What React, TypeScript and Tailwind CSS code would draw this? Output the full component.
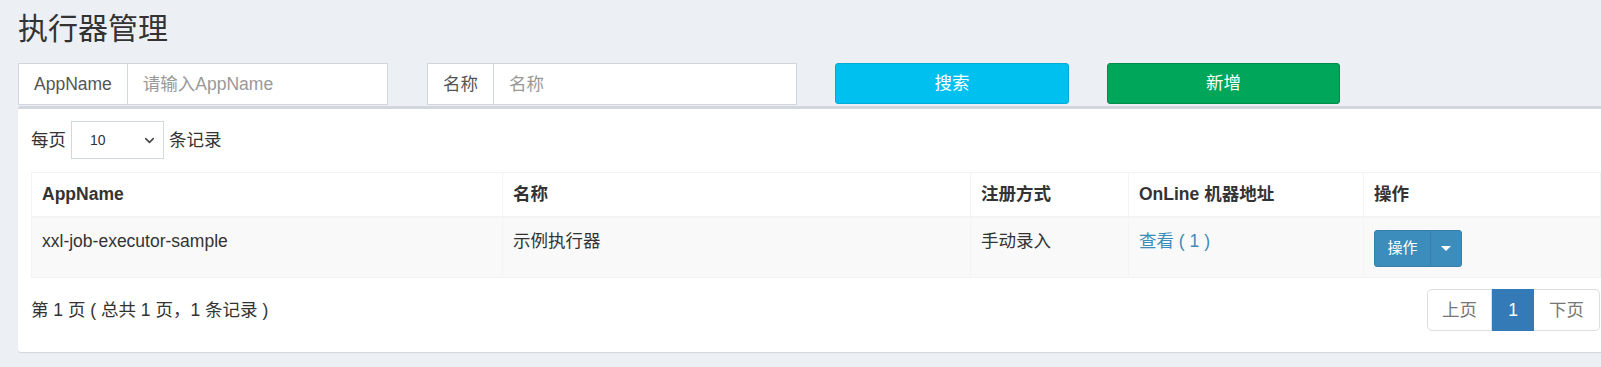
import { ChevronDown } from "lucide-react";

const font = { fontFamily: '"Liberation Sans", "Noto Sans CJK SC", sans-serif' };

const columns = ["AppName", "名称", "注册方式", "OnLine 机器地址", "操作"];

function InputGroup({ label, placeholder, className }: { label: string; placeholder: string; className: string }) {
  return (
    <div className={`flex h-[42px] ${className}`}>
      <span className="flex items-center px-[15px] border border-[#d2d6de] bg-white text-[17.5px] text-[#555]">{label}</span>
      <input
        placeholder={placeholder}
        className="flex-1 min-w-0 px-[15px] border border-l-0 border-[#d2d6de] bg-white text-[17.5px] text-[#555] placeholder:text-[#999] outline-none"
      />
    </div>
  );
}

export default function App() {
  return (
    <div className="w-[1601px] h-[367px] overflow-hidden bg-[#ecf0f5] text-[#333]" style={font}>
      <div className="pt-[12px] pl-[18px]">
        <h1 className="text-[30px] leading-[34px] font-normal text-[#333]">执行器管理</h1>
      </div>

      <div className="flex mt-[17px]">
        <InputGroup label="AppName" placeholder="请输入AppName" className="ml-[18px] w-[370px]" />
        <InputGroup label="名称" placeholder="名称" className="ml-[39px] w-[370px]" />
        <button className="ml-[38px] w-[234px] h-[41px] rounded-[3px] border border-[#00acd6] bg-[#00c0ef] text-white text-[17.5px]">
          搜索
        </button>
        <button className="ml-[38px] w-[233px] h-[41px] rounded-[3px] border border-[#008d4c] bg-[#00a65a] text-white text-[17.5px]">
          新增
        </button>
      </div>

      <div className="ml-[18px] mt-[1px] w-[1595px] bg-white border-t-[3px] border-[#d2d6de] rounded-[3px] shadow-[0_1px_1px_rgba(0,0,0,0.1)] px-[13px] pt-[12px] pb-[21px]">
        <div className="flex items-center gap-[5px] text-[17.5px] h-[38px]">
          <span>每页</span>
          <div className="flex items-center justify-between w-[93px] h-[38px] border border-[#d2d6de] pl-[18px] pr-[6px] text-[14px]">
            <span>10</span>
            <ChevronDown size={15} strokeWidth={2.5} className="text-[#444]" />
          </div>
          <span>条记录</span>
        </div>

        <div className="mt-[13px] w-[1570px] border-t border-l border-[#f4f4f4] text-[17.5px]">
          <div className="grid grid-cols-[471px_468px_158px_235px_237px]">
            {columns.map((c) => (
              <div key={c} className="h-[45px] flex items-center px-[10px] border-r border-b-2 border-[#f4f4f4] font-bold">
                {c}
              </div>
            ))}
          </div>
          <div className="grid grid-cols-[471px_468px_158px_235px_237px] bg-[#f9f9f9]">
            <div className="h-[60px] px-[10px] pt-[11px] leading-[25px] border-r border-b border-[#f4f4f4]">xxl-job-executor-sample</div>
            <div className="h-[60px] px-[10px] pt-[11px] leading-[25px] border-r border-b border-[#f4f4f4]">示例执行器</div>
            <div className="h-[60px] px-[10px] pt-[11px] leading-[25px] border-r border-b border-[#f4f4f4]">手动录入</div>
            <div className="h-[60px] px-[10px] pt-[11px] leading-[25px] border-r border-b border-[#f4f4f4]">
              <a className="text-[#3c8dbc]">查看 ( 1 )</a>
            </div>
            <div className="h-[60px] px-[10px] pt-[12px] border-r border-b border-[#f4f4f4]">
              <div className="inline-flex h-[37px] rounded-[3px] border border-[#367fa9] bg-[#3c8dbc] text-white text-[15px]">
                <span className="flex items-center justify-center w-[56px] border-r border-[#367fa9]">操作</span>
                <span className="flex items-center justify-center w-[30px]">
                  <span className="w-0 h-0 border-l-[5px] border-r-[5px] border-t-[5px] border-l-transparent border-r-transparent border-t-white" />
                </span>
              </div>
            </div>
          </div>
        </div>

        <div className="flex items-center mt-[11px] text-[17.5px]">
          <span>第 1 页 ( 总共 1 页，1 条记录 )</span>
          <div className="ml-auto flex h-[42px] text-[#777]">
            <span className="flex items-center justify-center w-[65px] border border-[#ddd] rounded-l-[5px] bg-white">上页</span>
            <span className="flex items-center justify-center w-[42px] border border-[#337ab7] bg-[#337ab7] text-white">1</span>
            <span className="flex items-center justify-center w-[66px] border border-[#ddd] border-l-0 rounded-r-[5px] bg-white">下页</span>
          </div>
        </div>
      </div>
    </div>
  );
}
